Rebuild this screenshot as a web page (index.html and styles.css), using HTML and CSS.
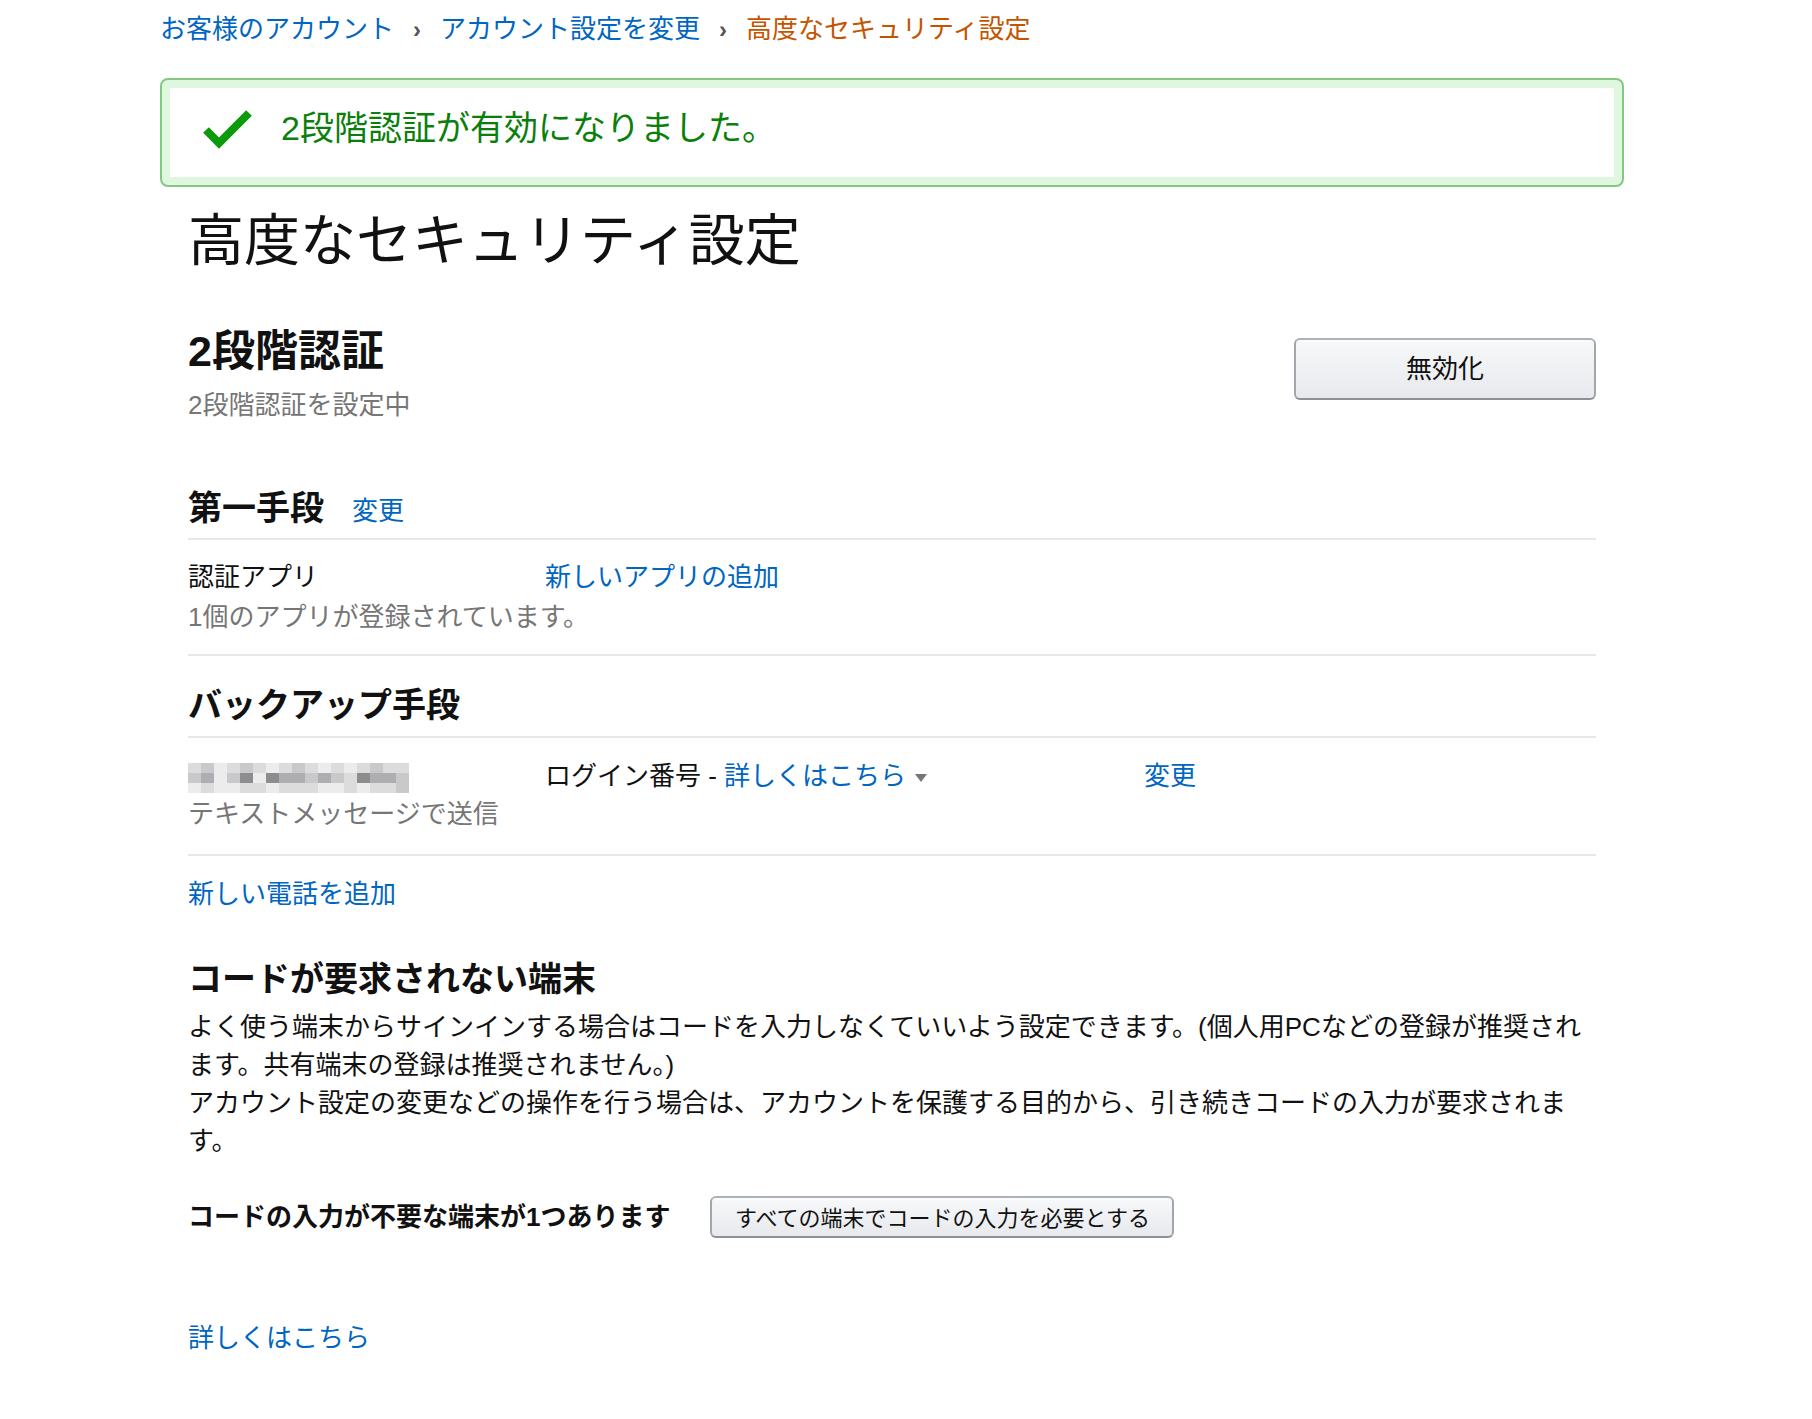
FILE: index.html
```html
<!DOCTYPE html>
<html lang="ja">
<head>
<meta charset="utf-8">
<title>高度なセキュリティ設定</title>
<link rel="stylesheet" href="styles.css">
</head>
<body>
<div class="page">
  <nav class="breadcrumb">
    <a class="link" href="#">お客様のアカウント</a><span class="sep">›</span><a class="link" href="#">アカウント設定を変更</a><span class="sep">›</span><span class="current">高度なセキュリティ設定</span>
  </nav>

  <div class="alert">
    <svg class="check" width="50" height="42" viewBox="0 0 50 42" aria-hidden="true">
      <polyline points="3,23 16,36 46,6" fill="none" stroke="#0a9a0a" stroke-width="8" stroke-linecap="butt" stroke-linejoin="miter"/>
    </svg>
    <span class="alert-text">2段階認証が有効になりました。</span>
  </div>

  <div class="content">
    <h1 class="title">高度なセキュリティ設定</h1>

    <div class="twostep">
      <div>
        <h2 class="h2">2段階認証</h2>
        <div class="muted sub">2段階認証を設定中</div>
      </div>
      <button class="btn btn-large" type="button">無効化</button>
    </div>

    <h3 class="h3 first">第一手段<a class="link h3-link" href="#">変更</a></h3>
    <div class="divider d1"></div>
    <div class="grid app">
      <div class="nowrap">
        <div class="lh40">認証アプリ</div>
        <div class="lh40 muted">1個のアプリが登録されています。</div>
      </div>
      <div class="lh40"><a class="link" href="#">新しいアプリの追加</a></div>
    </div>
    <div class="divider d2"></div>

    <h3 class="h3 backup">バックアップ手段</h3>
    <div class="divider d3"></div>
    <div class="grid phone">
      <div class="nowrap">
        <div class="line"><span class="blur"><i class="s2"></i><i class="s3"></i><i class="s1"></i><i class="s2"></i><i class="s3"></i><i class="s2"></i><i class="s1"></i><i class="s2"></i><i class="s3"></i><i class="s2"></i><i class="s1"></i><i class="s2"></i><i class="s1"></i><i class="s2"></i><i class="s3"></i><i class="s2"></i><i class="s2"></i><i class="s3"></i><i class="s4"></i><i class="s1"></i><i class="s3"></i><i class="s5"></i><i class="s1"></i><i class="s5"></i><i class="s4"></i><i class="s4"></i><i class="s3"></i><i class="s4"></i><i class="s3"></i><i class="s2"></i><i class="s5"></i><i class="s4"></i><i class="s4"></i><i class="s3"></i><i class="s1"></i><i class="s2"></i><i class="s1"></i><i class="s1"></i><i class="s2"></i><i class="s2"></i><i class="s1"></i><i class="s2"></i><i class="s2"></i><i class="s2"></i><i class="s1"></i><i class="s1"></i><i class="s2"></i><i class="s1"></i><i class="s2"></i><i class="s2"></i><i class="s3"></i></span></div>
        <div class="line muted">テキストメッセージで送信</div>
      </div>
      <div class="line">ログイン番号 - <a class="link" href="#">詳しくはこちら</a> <span class="caret"></span></div>
      <div class="line"><a class="link" href="#">変更</a></div>
    </div>
    <div class="divider d4"></div>

    <div class="line addphone"><a class="link" href="#">新しい電話を追加</a></div>

    <h3 class="h3 nocode">コードが要求されない端末</h3>
    <p class="para">よく使う端末からサインインする場合はコードを入力しなくていいよう設定できます。(個人用PCなどの登録が推奨されます。共有端末の登録は推奨されません。)<br>アカウント設定の変更などの操作を行う場合は、アカウントを保護する目的から、引き続きコードの入力が要求されます。</p>

    <div class="devices">
      <span class="devices-text">コードの入力が不要な端末が1つあります</span>
      <button class="btn btn-small" type="button">すべての端末でコードの入力を必要とする</button>
    </div>

    <div class="line more"><a class="link" href="#">詳しくはこちら</a></div>
  </div>
</div>
</body>
</html>
```

FILE: styles.css
```css
* { box-sizing: border-box; }

html, body {
  margin: 0;
  padding: 0;
  background: #fff;
}

body {
  font-family: "Liberation Sans", "Noto Sans CJK JP", sans-serif;
  font-size: 26px;
  line-height: 38px;
  color: #111;
}

.page {
  margin-left: 160px;
  width: 1464px;
  padding-bottom: 60px;
}

.link {
  color: #0066c0;
  text-decoration: none;
}

.muted { color: #767676; }
.nowrap { white-space: nowrap; }

/* breadcrumb */
.breadcrumb {
  padding-top: 10px;
  line-height: 38px;
  white-space: nowrap;
}
.sep {
  display: inline-block;
  padding: 0 19px;
  color: #555;
  font-weight: bold;
  font-size: 24px;
}
.current { color: #c45500; }

/* alert */
.alert {
  margin-top: 29px;
  height: 109px;
  border: 2px solid #82c882;
  border-radius: 8px;
  box-shadow: inset 0 0 0 8px #dff6df;
  display: flex;
  align-items: center;
  padding: 0 0 10px 41px;
}
.check { flex: none; margin-top: 0; }
.alert-text {
  margin-left: 28px;
  font-size: 34px;
  line-height: 44px;
  color: #0b7f0b;
}

/* content */
.content { padding: 0 28px; }

.title {
  margin: 20px 0 0;
  font-size: 56px;
  line-height: 68px;
  font-weight: normal;
}

.twostep {
  margin-top: 49px;
  display: flex;
  justify-content: space-between;
  align-items: flex-start;
}
.h2 {
  margin: 0;
  font-size: 43px;
  line-height: 54px;
  font-weight: bold;
}
.sub { margin-top: 8px; }

.btn {
  font-family: "Liberation Sans", "Noto Sans CJK JP", sans-serif;
  color: #111;
  background: linear-gradient(to bottom, #f7f8fa, #e7e9ec);
  border: 2px solid #adb1b8;
  border-color: #adb1b8 #a2a6ac #8d9096;
  border-radius: 6px;
  box-shadow: inset 0 2px 0 rgba(255,255,255,0.6);
  padding: 0;
  cursor: pointer;
}
.btn-large {
  margin-top: 14px;
  width: 302px;
  height: 62px;
  font-size: 26px;
  padding-bottom: 5px;
}
.btn-small {
  margin-left: 40px;
  width: 464px;
  height: 42px;
  font-size: 22px;
  padding-bottom: 2px;
}

.h3 {
  margin: 0;
  font-size: 34px;
  line-height: 42px;
  font-weight: bold;
}
.h3-link {
  margin-left: 28px;
  font-size: 26px;
  font-weight: normal;
}
.first { margin-top: 63px; }
.backup { margin-top: 28px; }
.nocode { margin-top: 45px; }

.divider {
  height: 2px;
  background: #e7e7e7;
}
.d1 { margin-top: 6px; }
.d2 { margin-top: 17px; }
.d3 { margin-top: 10px; }
.d4 { margin-top: 21px; }

.grid {
  display: grid;
  grid-template-columns: 357px 599px 1fr;
}
.app { margin-top: 17px; }
.phone { margin-top: 19px; }

.lh40 { line-height: 40px; }
.line { line-height: 38px; }

.blur {
  display: inline-grid;
  grid-template-columns: repeat(17, 13px);
  grid-template-rows: repeat(3, 10px);
  vertical-align: middle;
  filter: blur(0.4px);
}
.blur i { display: block; }
.s1 { background: #ececec; }
.s2 { background: #dcdcdc; }
.s3 { background: #c9c9cb; }
.s4 { background: #aeaeb2; }
.s5 { background: #8d8d90; }

.caret {
  display: inline-block;
  width: 0;
  height: 0;
  border-left: 6px solid transparent;
  border-right: 6px solid transparent;
  border-top: 8px solid #767676;
  vertical-align: middle;
  margin-left: 2px;
}

.addphone { margin-top: 19px; }

.para {
  margin: 8px 0 0;
  line-height: 38px;
}

.devices {
  margin-top: 36px;
  display: flex;
  align-items: center;
}
.devices-text {
  font-weight: bold;
}

.more { margin-top: 81px; }
```
